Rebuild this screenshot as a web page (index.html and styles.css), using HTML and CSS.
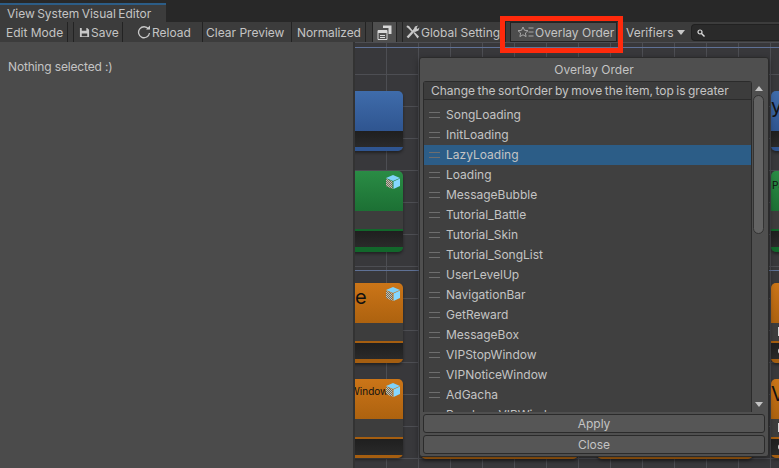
FILE: index.html
```html
<!DOCTYPE html>
<html>
<head>
    <title>View System Visual Editor</title>
    <meta name="viewport" content="width=device-width, initial-scale=1">
    <link rel="stylesheet" href="styles.css">
</head>
<body>
    <svg class="defs" width="0" height="0">
        <defs>
            <pattern id="dither" width="2" height="2" patternUnits="userSpaceOnUse">
                <rect width="2" height="2" fill="#c9c2ae"/>
                <rect width="1" height="1" fill="#6b6b60"/>
                <rect x="1" y="1" width="1" height="1" fill="#6b6b60"/>
            </pattern>
        </defs>
        <symbol id="cube" viewBox="0 0 14 14">
            <path d="M7 0L14 3L7 6L0 3Z" fill="#7fd2fa"/>
            <path d="M7.5 6.5L14 3.5V11L7.5 14Z" fill="#86d8ff"/>
            <path d="M0 3.5L6.5 6.5V14L0 11Z" fill="url(#dither)"/>
        </symbol>
    </svg>

    <div class="titlebar">
        <div class="tab">View System Visual Editor</div>
    </div>

    <div class="toolbar">
        <div class="tool tool-edit">Edit Mode</div>
        <div class="tool tool-save">
            <svg width="11" height="11" viewBox="0 0 12 12"><path d="M1 1H9L11 3V11H1ZM3 1V4H8V1ZM3 7V10H9V7Z" fill="#c8c8c8" fill-rule="evenodd"/></svg>
            Save
        </div>
        <div class="tool tool-reload">
            <svg width="14" height="14" viewBox="0 0 14 14"><path d="M11.5 4A5.5 5.5 0 1 0 12.5 8" fill="none" stroke="#c8c8c8" stroke-width="1.3"/><path d="M9 4.5H13V0.5Z" fill="#c8c8c8"/></svg>
            Reload
        </div>
        <div class="tool tool-clear">Clear Preview</div>
        <div class="tool tool-norm">Normalized</div>
        <div class="tool tool-layout">
            <svg width="15" height="15" viewBox="0 0 15 15"><path d="M6 0.5H14.5V9H11.5V3H6Z" fill="#d8d8d8"/><path d="M1 5.5H10V14.5H1Z" fill="none" stroke="#d8d8d8"/><path d="M1 5H10V8H1ZM3 10H8V11H3ZM3 12H8V13H3Z" fill="#d8d8d8"/></svg>
        </div>
        <div class="tool tool-global">
            <svg width="14" height="14" viewBox="0 0 14 14"><path d="M1.5 12.5L8.5 5" stroke="#c8c8c8" stroke-width="2.4"/><path d="M7 5.5L9 1.5L12 0.5L10.5 3L11.5 4L13.5 2.5L12.5 5.5L9 7Z" fill="#c8c8c8"/><path d="M1 0.5L3 1L7 6L6 7L2 3L0.5 2Z" fill="#c8c8c8"/><path d="M7.5 8L8.5 7L13 11.5L11.5 13.5Z" fill="#c8c8c8"/></svg>
            Global Setting
        </div>
        <div class="tool tool-overlay">
            <svg width="17" height="12" viewBox="0 0 17 12"><path d="M6 1L7.5 4.3L11 4.7L8.4 7L9.1 10.6L6 8.8L2.9 10.6L3.6 7L1 4.7L4.5 4.3Z" fill="none" stroke="#a8a8a8"/><path d="M11.5 2H16.5M11.5 6H16.5M11.5 10H16.5" stroke="#a8a8a8"/></svg>
            Overlay Order
        </div>
        <div class="tool tool-verifiers">Verifiers <span class="caret"></span></div>
        <div class="search">
            <svg width="8" height="8" viewBox="0 0 8 8"><circle cx="3" cy="3" r="2" fill="none" stroke="#ddd" stroke-width="1.2"/><path d="M4.5 4.5L7.5 7.5" stroke="#ddd" stroke-width="1.4"/></svg>
        </div>
    </div>

    <div class="main">
        <div class="inspector">Nothing selected :)</div>
        <div class="graph">
            <div class="node node-blue node-left n1">
                <div class="node-head"></div>
                <div class="node-dark"></div>
                <div class="node-foot"></div>
            </div>
            <div class="node node-green node-left n2">
                <div class="node-head"><svg class="cube"><use href="#cube"/></svg></div>
                <div class="node-gray"></div>
                <div class="node-dark"></div>
                <div class="node-foot"></div>
            </div>
            <div class="node node-orange node-left n3">
                <div class="node-head"><span class="name-big">e</span><svg class="cube"><use href="#cube"/></svg></div>
                <div class="node-gray"></div>
                <div class="node-dark"></div>
                <div class="node-foot"></div>
            </div>
            <div class="node node-orange node-left n4">
                <div class="node-head"><span class="name-small">Window</span><svg class="cube"><use href="#cube"/></svg></div>
                <div class="node-gray"></div>
                <div class="node-dark"></div>
                <div class="node-foot"></div>
            </div>
            <div class="node node-blue node-right n1">
                <div class="node-head"><span class="name-big">y</span></div>
                <div class="node-dark"></div>
                <div class="node-foot"></div>
            </div>
            <div class="node node-green node-right n2">
                <div class="node-head"><span class="name-tiny">Pa</span></div>
                <div class="node-gray"></div>
                <div class="node-dark"></div>
                <div class="node-foot"></div>
            </div>
            <div class="node node-orange node-right n3">
                <div class="node-head"></div>
                <div class="node-gray"></div>
                <div class="node-dark"></div>
                <div class="node-foot"></div>
            </div>
            <div class="node node-orange node-right n4">
                <div class="node-head"><span class="name-big">V</span></div>
                <div class="node-gray"></div>
                <div class="node-dark"></div>
                <div class="node-foot"></div>
            </div>
            <div class="node node-orange under-a"><div class="node-foot"></div></div>
            <div class="node node-orange under-b"><div class="node-foot"></div></div>
        </div>
    </div>

    <div class="dialog">
        <div class="dialog-title">Overlay Order</div>
        <div class="dialog-body">
            <div class="list-wrap">
                <div class="list-header">Change the sortOrder by move the item, top is greater</div>
                <div class="list">
                    <div class="item">SongLoading</div>
                    <div class="item">InitLoading</div>
                    <div class="item selected">LazyLoading</div>
                    <div class="item">Loading</div>
                    <div class="item">MessageBubble</div>
                    <div class="item">Tutorial_Battle</div>
                    <div class="item">Tutorial_Skin</div>
                    <div class="item">Tutorial_SongList</div>
                    <div class="item">UserLevelUp</div>
                    <div class="item">NavigationBar</div>
                    <div class="item">GetReward</div>
                    <div class="item">MessageBox</div>
                    <div class="item">VIPStopWindow</div>
                    <div class="item">VIPNoticeWindow</div>
                    <div class="item">AdGacha</div>
                    <div class="item">PurchaseVIPWindow</div>
                </div>
            </div>
            <div class="scrollbar">
                <span class="arrow-up"></span>
                <div class="thumb"></div>
                <span class="arrow-down"></span>
            </div>
        </div>
        <div class="dialog-btn">Apply</div>
        <div class="dialog-btn">Close</div>
    </div>

    <div class="highlight"></div>
</body>
</html>
```

FILE: styles.css
```css
html, body {
    margin: 0;
    height: 100%;
}
body {
    width: 779px;
    height: 468px;
    overflow: hidden;
    display: flex;
    flex-direction: column;
    position: relative;
    font-family: Inter, "Liberation Sans", sans-serif;
    font-size: 12px;
    color: #c4c4c4;
    background: #383838;
}
.defs {
    position: absolute;
}

.titlebar {
    height: 22px;
    flex: none;
    background: #282828;
    display: flex;
    align-items: flex-end;
}
.tab {
    width: 166px;
    height: 19px;
    box-sizing: border-box;
    border-top: 2px solid #2c5d87;
    background: #3c3c3c;
    padding-left: 7px;
    line-height: 17px;
    word-spacing: -1px;
}

.toolbar {
    height: 20px;
    flex: none;
    display: flex;
    background: #3c3c3c;
}
.tool {
    display: flex;
    align-items: center;
    box-sizing: border-box;
    border-right: 1px solid #232323;
    white-space: nowrap;
}
.tool-edit { width: 68px; padding-left: 6px; }
.tool-save { width: 50px; padding-left: 5px; margin-left: 5px; border-left: 1px solid #232323; gap: 1px; }
.tool-reload { width: 80px; padding-left: 14px; gap: 1px; }
.tool-clear { width: 89px; padding-left: 3px; }
.tool-norm { width: 74px; padding-left: 5px; letter-spacing: -0.1px; }
.tool-layout {
    width: 25px;
    margin-left: 6px;
    padding-right: 1px;
    justify-content: center;
    background: #4f4f4f;
    border-left: 1px solid #232323;
}
.tool-global { width: 104px; margin-left: 5px; padding-left: 3px; gap: 1px; border-left: 1px solid #232323; }
.tool-overlay {
    width: 107px;
    margin-left: 4px;
    padding-left: 6px;
    gap: 1px;
    background: #4d4d4d;
    border: 1px solid #232323;
}
.tool-verifiers { width: 72px; padding-left: 9px; border-right: 0; gap: 4px; }
.caret {
    width: 0;
    height: 0;
    border-left: 4px solid transparent;
    border-right: 4px solid transparent;
    border-top: 5px solid #c8c8c8;
}
.search {
    flex: 1;
    margin: 2px 0 1px 2px;
    padding-left: 5px;
    display: flex;
    align-items: center;
    background: #2a2a2a;
    border: 1px solid #212121;
    border-right: 0;
    border-radius: 4px 0 0 4px;
}

.main {
    flex: 1;
    display: flex;
    min-height: 0;
}
.inspector {
    width: 355px;
    flex: none;
    box-sizing: border-box;
    padding: 17px 8px;
    background: #4b4b4b;
    border-right: 2px solid #333;
    letter-spacing: -0.16px;
    position: relative;
    z-index: 1;
}
.graph {
    flex: 1;
    position: relative;
    overflow: hidden;
    background-color: #38383b;
    background-image:
        linear-gradient(#5f7196, #5f7196),
        linear-gradient(#5f7196, #5f7196),
        linear-gradient(to right, transparent 31px, #4d4e53 31px, #4d4e53 32px, transparent 32px),
        linear-gradient(#4d4e53 1px, transparent 1px);
    background-size: 100% 1px, 100% 1px, 32px 32px, 32px 32px;
    background-position: 0 5px, 0 228px, 0 0, 0 0;
    background-repeat: no-repeat, no-repeat, repeat, repeat;
}

/* nodes sit on the free canvas */
.node {
    position: absolute;
    width: 120px;
    border-radius: 5px;
    overflow: hidden;
    display: flex;
    flex-direction: column;
    box-shadow: 0 2px 3px rgba(0, 0, 0, 0.4);
}
.node-left { left: -72px; }
.node-right { left: 416px; }
.n1 { top: 49px; height: 60px; }
.n2 { top: 129px; height: 81px; }
.n3 { top: 241px; height: 80px; }
.n4 { top: 337px; height: 79px; }
.under-a { left: 66px; width: 157px; top: 337px; height: 80px; }
.under-b { left: 242px; width: 156px; top: 337px; height: 80px; }
.node-head {
    height: 40px;
    flex: none;
    position: relative;
    color: #111;
    box-sizing: border-box;
}
.node-gray {
    height: 18px;
    flex: none;
    background: #3d3d3d;
    margin-bottom: 2px;
    position: relative;
}
.node-dark {
    height: 16px;
    flex: none;
    background: linear-gradient(#1f1f1f, #2a2a2a);
    position: relative;
}
.node-foot {
    flex: 1;
}
.node-blue .node-head { background: linear-gradient(#3f6cab, #2f5590); }
.node-blue .node-foot { background: #2f5590; }
.node-green .node-head { background: linear-gradient(#2a8c45, #1c7034); }
.node-green .node-foot { background: #12672b; }
.node-orange .node-head { background: linear-gradient(#cb7518, #ad620f); }
.node-orange .node-foot { background: #a55e10; }
.node-green .node-gray { box-shadow: 0 2px 0 #12672b; }
.node-orange .node-gray { box-shadow: 0 2px 0 #a55e10; }
.node-right.node-orange .node-gray::after {
    content: "";
    position: absolute;
    left: 7px;
    top: 4px;
    width: 3px;
    height: 9px;
    background: #d8d8d8;
}
.node-right.node-orange .node-dark::after {
    content: "";
    position: absolute;
    left: 7px;
    top: 5px;
    width: 4px;
    height: 6px;
    border-radius: 3px 0 0 3px;
    background: #d8d8d8;
}
.cube {
    position: absolute;
    right: 3px;
    top: 4px;
    width: 14px;
    height: 14px;
}
.name-big {
    position: absolute;
    font-size: 20px;
    line-height: 24px;
    top: 2px;
}
.name-small {
    position: absolute;
    font-size: 10px;
    top: 6px;
}
.name-tiny {
    position: absolute;
    font-size: 10px;
    top: 8px;
    left: 1px;
}
.node-left .name-big { left: 72px; }
.node-left .name-small { left: 67px; }
.node-right .name-big { left: 0; top: 3px; }

/* floating dialog */
.dialog {
    position: absolute;
    left: 419px;
    top: 57px;
    width: 350px;
    height: 400px;
    box-sizing: border-box;
    padding: 4px 3px 2px;
    display: flex;
    flex-direction: column;
    gap: 2px;
    background: #4f4f4f;
    border: 1px solid #2b2b2b;
    border-radius: 3px;
    box-shadow: 0 2px 6px rgba(0, 0, 0, 0.4);
    z-index: 2;
}
.dialog-title {
    height: 16px;
    margin-bottom: 1px;
    line-height: 16px;
    text-align: center;
    flex: none;
}
.dialog-body {
    flex: 1;
    min-height: 0;
    display: flex;
}
.list-wrap {
    width: 329px;
    flex: none;
    display: flex;
    flex-direction: column;
    box-sizing: border-box;
    border: 1px solid #2b2b2b;
    border-bottom: 0;
    border-radius: 3px 3px 0 0;
}
.list-header {
    height: 18px;
    flex: none;
    line-height: 17px;
    padding-left: 7px;
    box-sizing: border-box;
    background: #3c3c3c;
    border-bottom: 1px solid #2b2b2b;
    white-space: nowrap;
    word-spacing: -0.9px;
}
.list {
    flex: 1;
    min-height: 0;
    overflow: hidden;
    padding-top: 5px;
    background: #404040;
}
.item {
    height: 20px;
    line-height: 20px;
    padding-left: 22px;
    position: relative;
}
.item::before {
    content: "";
    position: absolute;
    left: 5px;
    top: 7px;
    width: 11px;
    height: 4px;
    border-top: 1px solid #6e6e6e;
    border-bottom: 1px solid #6e6e6e;
}
.item.selected {
    background: #2c5d87;
}
.scrollbar {
    flex: 1;
    display: flex;
    flex-direction: column;
    align-items: center;
    padding-top: 5px;
}
.arrow-up, .arrow-down {
    width: 0;
    height: 0;
    flex: none;
    border-left: 4px solid transparent;
    border-right: 4px solid transparent;
}
.arrow-up { border-bottom: 5px solid #c4c4c4; }
.arrow-down { border-top: 5px solid #c4c4c4; margin-top: auto; margin-bottom: 5px; }
.thumb {
    width: 11px;
    height: 139px;
    margin-top: 4px;
    box-sizing: border-box;
    background: #636363;
    border: 1px solid #333;
    border-radius: 6px;
}
.dialog-btn {
    height: 19px;
    flex: none;
    line-height: 18px;
    text-align: center;
    box-sizing: border-box;
    background: #565656;
    border: 1px solid #2b2b2b;
    border-radius: 3px;
}

.highlight {
    position: absolute;
    left: 500px;
    top: 16px;
    width: 123px;
    height: 37px;
    box-sizing: border-box;
    border: 5px solid #ff2a0c;
    z-index: 3;
}
```
